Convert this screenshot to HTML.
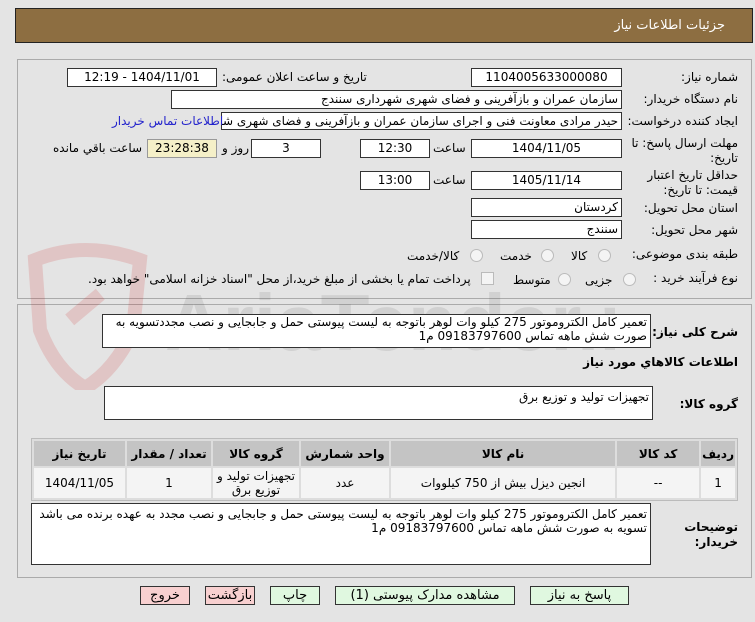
<!DOCTYPE html>
<html><head><meta charset="utf-8"><style>
body{margin:0;width:755px;height:622px;background:#e4e4e4;font-family:Tahoma,"DejaVu Sans","Liberation Sans",sans-serif;font-size:12px;color:#000;position:relative;overflow:hidden;direction:rtl}
.a{position:absolute}
.box{position:absolute;background:#fff;border:1px solid #333;box-sizing:border-box;padding:0 3px;line-height:17px;white-space:nowrap;overflow:hidden}
.c{text-align:center}
.l{position:absolute;white-space:nowrap}
.panel{position:absolute;left:17px;width:735px;border:1px solid #aaa;box-sizing:border-box}
.rad{position:absolute;width:11px;height:11px;border:1px solid #bbb;border-radius:50%;background:#f4f4f4}
table{border-collapse:separate;border-spacing:2px;position:absolute;left:31px;top:438px;width:707px;background:#ddd;border:1px solid #bbb}
th{background:#c4c4c4;height:23px;font-weight:bold;font-size:12px}
td{background:#f4f4f4;height:28px;text-align:center;font-size:12px;line-height:14px}
.btn{position:absolute;top:586px;height:19px;border:1px solid #333;box-sizing:border-box;text-align:center;line-height:17px;font-size:13px}
.b{font-weight:bold}
</style></head><body>
<div class="a" style="left:15px;top:8px;width:738px;height:35px;background:#8d6e41;border:1px solid #222;box-sizing:border-box"></div>
<div class="l" style="right:30px;top:18px;color:#fff;font-size:13px">جزئیات اطلاعات نیاز</div>

<div class="panel" style="top:59px;height:240px"></div>
<div class="panel" style="top:304px;height:274px"></div>

<svg class="a" style="left:15px;top:240px;opacity:.13" width="600" height="150"><path d="M20 20 Q70 0 125 20 L118 90 Q100 130 70 148 Q40 130 25 90 Z" fill="none" stroke="#c00" stroke-width="14"/><rect x="50" y="60" width="40" height="14" fill="#c00" transform="rotate(-40 70 67)"/><text x="150" y="110" font-size="80" font-weight="bold" fill="#555" font-family="Liberation Sans" direction="ltr">AriaTender.net</text></svg>

<div class="l" style="right:17px;top:70px">شماره نیاز:</div>
<div class="box c" style="left:471px;top:68px;width:151px;height:19px">1104005633000080</div>
<div class="l" style="left:222px;top:70px">تاریخ و ساعت اعلان عمومی:</div>
<div class="box c" style="left:67px;top:68px;width:150px;height:19px">1404/11/01 - 12:19</div>

<div class="l" style="right:17px;top:92px">نام دستگاه خریدار:</div>
<div class="box" style="left:171px;top:90px;width:451px;height:19px">سازمان عمران و بازآفرینی و فضای شهری شهرداری سنندج</div>

<div class="l" style="right:17px;top:114px">ایجاد کننده درخواست:</div>
<div class="box" style="left:221px;top:112px;width:401px;height:18px">حیدر مرادی معاونت فنی و اجرای سازمان عمران و بازآفرینی و فضای شهری شهرداری</div>
<div class="l" style="left:112px;top:114px;color:#2222cc">اطلاعات تماس خریدار</div>

<div class="l" style="right:17px;top:136px;line-height:15px">مهلت ارسال پاسخ: تا<br>تاریخ:</div>
<div class="box c" style="left:471px;top:139px;width:151px;height:19px">1404/11/05</div>
<div class="l" style="left:433px;top:141px">ساعت</div>
<div class="box c" style="left:360px;top:139px;width:70px;height:19px">12:30</div>
<div class="box c" style="left:251px;top:139px;width:70px;height:19px">3</div>
<div class="l" style="left:222px;top:141px">روز و</div>
<div class="box c" style="left:147px;top:139px;width:70px;height:19px;background:#f5f0c8;border-color:#999">23:28:38</div>
<div class="l" style="left:53px;top:141px">ساعت باقي مانده</div>

<div class="l" style="right:17px;top:168px;line-height:15px">حداقل تاریخ اعتبار<br>قیمت: تا تاریخ:</div>
<div class="box c" style="left:471px;top:171px;width:151px;height:19px">1405/11/14</div>
<div class="l" style="left:433px;top:173px">ساعت</div>
<div class="box c" style="left:360px;top:171px;width:70px;height:19px">13:00</div>

<div class="l" style="right:17px;top:201px">استان محل تحویل:</div>
<div class="box" style="left:471px;top:198px;width:151px;height:19px">کردستان</div>
<div class="l" style="right:17px;top:223px">شهر محل تحویل:</div>
<div class="box" style="left:471px;top:220px;width:151px;height:19px">سنندج</div>

<div class="l" style="right:17px;top:247px">طبقه بندی موضوعی:</div>
<div class="rad" style="left:598px;top:249px"></div><div class="l" style="left:571px;top:249px">کالا</div>
<div class="rad" style="left:541px;top:249px"></div><div class="l" style="left:500px;top:249px">خدمت</div>
<div class="rad" style="left:470px;top:249px"></div><div class="l" style="left:407px;top:249px">کالا/خدمت</div>

<div class="l" style="right:17px;top:271px">نوع فرآیند خرید :</div>
<div class="rad" style="left:623px;top:273px"></div><div class="l" style="left:585px;top:273px">جزیی</div>
<div class="rad" style="left:558px;top:273px"></div><div class="l" style="left:513px;top:273px">متوسط</div>
<div class="a" style="left:481px;top:272px;width:11px;height:11px;border:1px solid #bbb;background:#f4f4f4"></div>
<div class="l" style="left:88px;top:272px">پرداخت تمام یا بخشی از مبلغ خرید،از محل "اسناد خزانه اسلامی" خواهد بود.</div>

<div class="l b" style="right:17px;top:325px;font-size:12px">شرح کلی نیاز:</div>
<div class="box" style="left:102px;top:314px;width:549px;height:34px;white-space:normal;line-height:14px;font-size:12px">تعمیر کامل الکتروموتور 275 کیلو وات لوهر باتوجه به لیست پیوستی حمل و جابجایی و نصب مجددتسویه به صورت شش ماهه تماس 09183797600 م1</div>
<div class="l b" style="right:17px;top:355px;font-size:12px">اطلاعات کالاهاي مورد نیاز</div>
<div class="l b" style="right:17px;top:397px;font-size:12px">گروه کالا:</div>
<div class="box" style="left:104px;top:386px;width:549px;height:34px;line-height:20px">تجهیزات تولید و توزیع برق</div>

<table>
<tr><th style="width:26px">ردیف</th><th style="width:80px">کد کالا</th><th>نام کالا</th><th style="width:86px">واحد شمارش</th><th style="width:84px">گروه کالا</th><th style="width:82px">تعداد / مقدار</th><th style="width:89px">تاریخ نیاز</th></tr>
<tr><td>1</td><td>--</td><td>انجین دیزل بیش از 750 کیلووات</td><td>عدد</td><td>تجهیزات تولید و توزیع برق</td><td>1</td><td>1404/11/05</td></tr>
</table>

<div class="l b" style="right:17px;top:520px;font-size:12px;line-height:15px">توضیحات<br>خریدار:</div>
<div class="box" style="left:31px;top:503px;width:620px;height:62px;white-space:normal;line-height:14px;padding-top:3px">تعمیر کامل الکتروموتور 275 کیلو وات لوهر باتوجه به لیست پیوستی حمل و جابجایی و نصب مجدد به عهده برنده می باشد تسویه به صورت شش ماهه تماس 09183797600 م1</div>

<div class="btn" style="left:140px;width:50px;background:#f8d0d0">خروج</div>
<div class="btn" style="left:205px;width:50px;background:#f8d0d0">بازگشت</div>
<div class="btn" style="left:270px;width:50px;background:#e0f8e0">چاپ</div>
<div class="btn" style="left:335px;width:180px;background:#e0f8e0">مشاهده مدارک پیوستی (1)</div>
<div class="btn" style="left:530px;width:99px;background:#e0f8e0">پاسخ به نیاز</div>
</body></html>
